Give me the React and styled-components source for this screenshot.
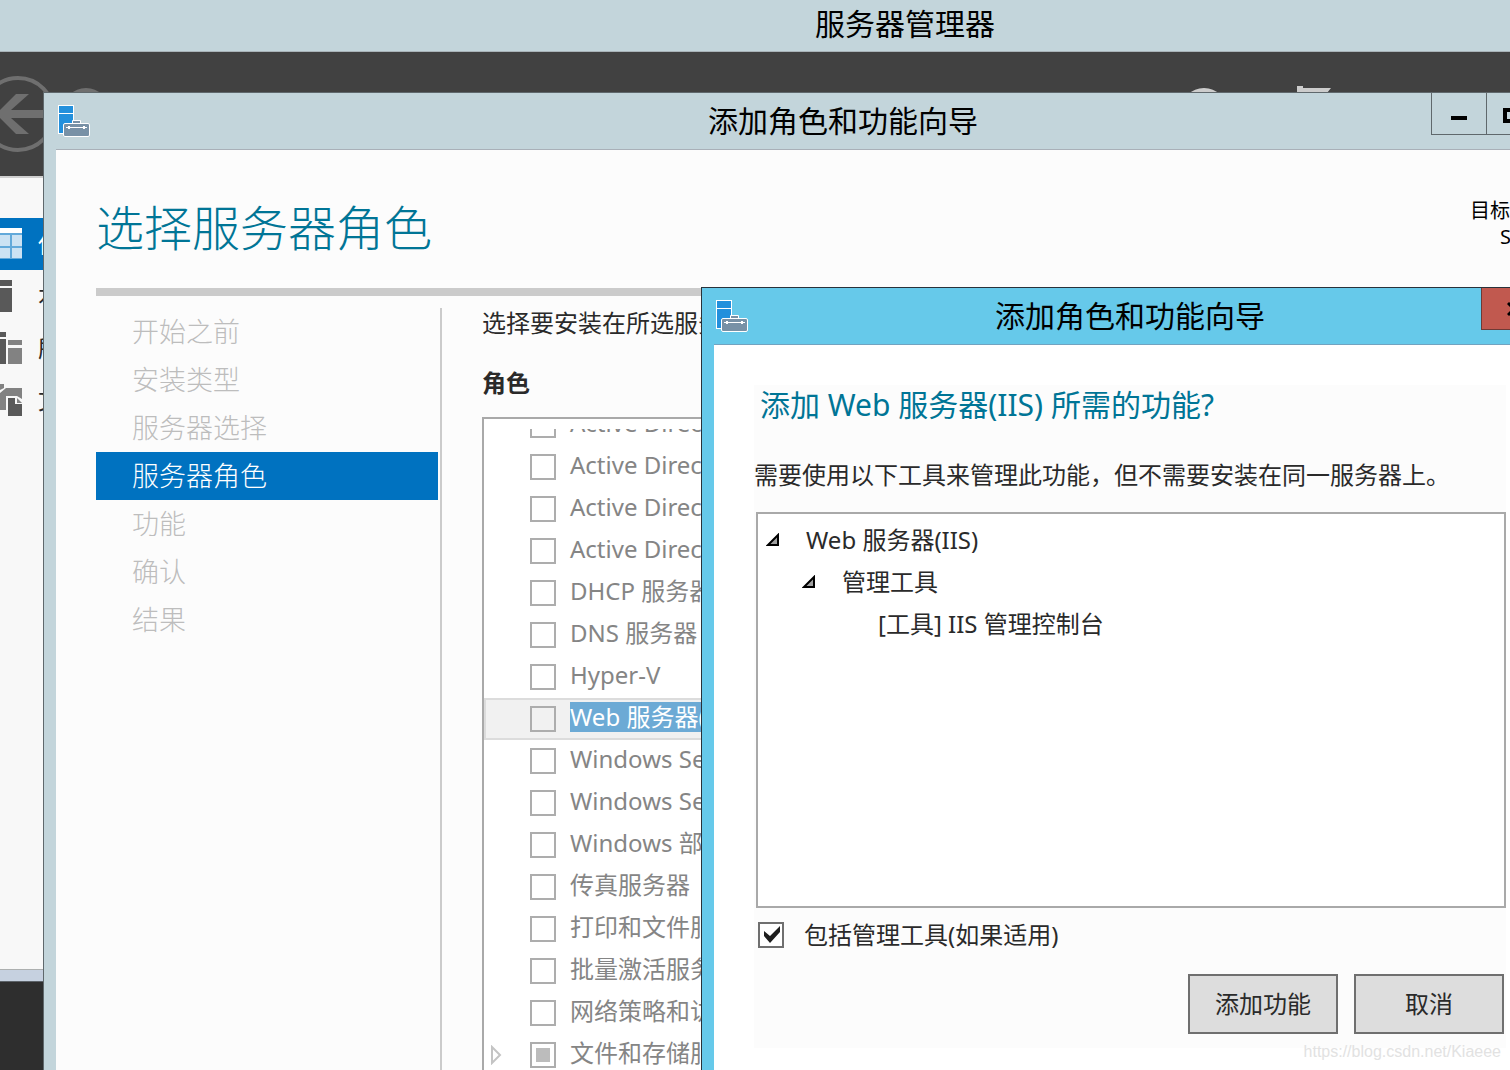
import styled, { createGlobalStyle } from "styled-components";
import { useEffect, useRef } from "react";

const GlobalStyle = createGlobalStyle`
  * {
    box-sizing: border-box;
  }

  body {
    margin: 0;
    font-family: "Noto Sans", "Noto Sans CJK SC", sans-serif;
    font-size: 24px;
    line-height: 30px;
    color: #2a2a2a;
  }

  h1,
  h2,
  h3,
  p,
  ul {
    margin: 0;
    padding: 0;
    font-weight: 400;
  }

  ul {
    list-style: none;
  }

  a {
    color: inherit;
    text-decoration: none;
  }
`;

const Desktop = styled.div`
  position: relative;
  height: 100vh;
  overflow: hidden;
  background-color: #2e2e2e;
`;

/* Server manager */

const ManagerWindow = styled.section`
  position: absolute;
  inset: 0 -300px 88px 0;
  display: flex;
  flex-direction: column;
  background-color: #c6d1e0;
  border-bottom: 1px solid #5c6268;
  padding-bottom: 11px;
`;

const ManagerTitle = styled.h1`
  height: 52px;
  padding-top: 2px;
  font-size: 30px;
  line-height: 44px;
  text-align: center;
  color: #000;
  background-color: #c3d5db;
  border-bottom: 1px solid #a9b3b8;
`;

const Toolbar = styled.div`
  display: flex;
  justify-content: space-between;
  height: 126px;
  padding-right: 460px;
  background-color: #414141;
  border-bottom: 2px solid #cfcfcf;
`;

const Sidebar = styled.nav`
  flex: 1;
  padding-top: 40px;
  background-color: #f8f8f8;
  border-bottom: 1px solid #adb0b0;
`;

const SidebarLink = styled.a`
  display: flex;
  align-items: center;
  gap: 16px;
  height: 52px;
  color: ${(props) => (props.$active ? "#fff" : "#2a2a2a")};
  background-color: ${(props) => (props.$active ? "#0072c0" : "transparent")};
`;

/* Shared window parts */

const AppWindow = styled.section`
  position: absolute;
  padding: 0 12px;
  border: 1px solid ${(props) => props.$edge};
  background-color: ${(props) => props.$frame};
`;

const WizardWindow = styled(AppWindow)`
  inset: 92px -133px -40px 43px;
  display: flex;
  flex-direction: column;
`;

const DialogWindow = styled(AppWindow)`
  top: 287px;
  left: 701px;
  right: -49px;
`;

const TitleBar = styled.header`
  display: grid;
  grid-template-columns: 1fr auto 1fr;
  height: 57px;
  border-bottom: 1px solid ${(props) => props.$line};
`;

const TitleIcon = styled.div`
  padding: 12px 2px;
  line-height: 0;
`;

const TitleText = styled.h2`
  font-size: 30px;
  line-height: 56px;
  color: #000;
`;

const TitleButtons = styled.div`
  display: flex;
  justify-content: flex-end;
`;

const CaptionButton = styled.button`
  display: flex;
  align-items: center;
  justify-content: center;
  width: ${(props) => (props.$wide ? 89 : 56)}px;
  height: 42px;
  margin: 0 0 0 -1px;
  padding: 8px 0 0;
  border: 1px solid #5f686c;
  border-top: 0;
  background: none;
`;

const DialogClose = styled(CaptionButton)`
  width: 65px;
  padding: 0;
  border-color: #6e3a36;
  background-color: #c1594f;
`;

/* Wizard */

const WizardBody = styled.div`
  flex: 1;
  display: flex;
  flex-direction: column;
  padding: 0 40px;
  background-color: #fcfcfc;
`;

const WizardHeader = styled.div`
  display: flex;
  justify-content: space-between;
  height: 146px;
  padding: 48px 20px 0 0;
  border-bottom: 8px solid #cbcbcb;
`;

const WizardHeading = styled.h1`
  font-size: 48px;
  font-weight: 300;
  line-height: 60px;
  color: #007596;
`;

const Target = styled.p`
  font-size: 20px;
  line-height: 26px;
  text-align: right;
  color: #000;
`;

const WizardColumns = styled.div`
  flex: 1;
  display: grid;
  grid-template-columns: 346px 1fr;
  gap: 40px;
  padding-top: 12px;
`;

const Steps = styled.nav`
  padding-right: 2px;
  border-right: 2px solid #cbcbcb;
`;

const Step = styled.a`
  display: block;
  padding-left: 36px;
  font-size: 27px;
  font-weight: 300;
  line-height: 48px;
  color: ${(props) => (props.$active ? "#fff" : "#bdbdbd")};
  background-color: ${(props) => (props.$active ? "#0072c0" : "transparent")};
`;

const RolesColumn = styled.div`
  display: flex;
  flex-direction: column;
`;

const RolesTitle = styled.h3`
  margin: 30px 0 19px;
  font-size: 24px;
  font-weight: 700;
`;

const RolesBox = styled.div`
  flex: 1;
  padding-top: 10px;
  border: 2px solid #a9a9a9;
  background-color: #fff;
`;

const RolesViewport = styled.div`
  overflow: hidden;
`;

const RolesList = styled.ul`
  margin-top: -25px;
`;

const RoleRow = styled.li`
  display: grid;
  grid-template-columns: 44px 1fr;
  align-items: center;
  height: 42px;
  border: 2px solid ${(props) => (props.$selected ? "#dcdcdc" : "transparent")};
  background-color: ${(props) => (props.$selected ? "#f1f1f1" : "transparent")};
`;

const Expander = styled.span`
  padding-left: 4px;
  line-height: 0;
`;

const RoleLabel = styled.label`
  display: flex;
  align-items: center;
  gap: 14px;
  color: #858585;
  white-space: nowrap;
`;

const RoleName = styled.span`
  margin-bottom: 4px;
  color: ${(props) => (props.$selected ? "#fff" : "inherit")};
  background-color: ${(props) => (props.$selected ? "#6caad5" : "transparent")};
`;

const Checkbox = styled.input`
  appearance: none;
  width: 26px;
  height: 26px;
  margin: 0;
  border: 2px solid #6f6f6f;
  background-color: #fff;

  &:disabled {
    border-color: #adadad;
    background-color: transparent;
  }

  &:checked::before {
    content: "";
    display: block;
    width: 22px;
    height: 22px;
    background-color: #1e1e1e;
    clip-path: polygon(4px 7px, 10px 12px, 20px 2px, 20px 8px, 10px 19px, 4px 12px);
  }

  &:indeterminate::before {
    content: "";
    display: block;
    width: 14px;
    height: 14px;
    margin: 4px;
    background-color: #bcbcbc;
  }
`;

/* Dialog */

const DialogBody = styled.div`
  padding: 40px;
  background-color: #fff;
`;

const DialogContent = styled.div`
  padding-bottom: 14px;
  background-color: #fcfcfc;
`;

const DialogHeading = styled.h1`
  padding-left: 6px;
  font-size: 30px;
  line-height: 40px;
  color: #007596;
`;

const DialogText = styled.p`
  margin: 35px 0 22px;
`;

const Tree = styled.ul`
  height: 396px;
  margin-left: 2px;
  padding: 5px 8px;
  border: 2px solid #a9a9a9;
  background-color: #fff;
`;

const TreeItem = styled.li`
  display: grid;
  grid-template-columns: 40px 1fr;
  align-items: center;
  height: 42px;
  padding-left: ${(props) => props.$level * 36}px;
`;

const TreeArrow = styled.span`
  line-height: 0;
`;

const ToolsLabel = styled.label`
  display: flex;
  align-items: center;
  gap: 20px;
  margin: 12px 0 24px;
  padding-left: 4px;
`;

const Actions = styled.div`
  display: flex;
  justify-content: flex-end;
  gap: 16px;
  padding-right: 2px;
`;

const ActionButton = styled.button`
  width: 150px;
  height: 60px;
  padding: 0;
  font: inherit;
  color: #2a2a2a;
  border: 2px solid #6f6f6f;
  background-color: #ddd;
`;

const Watermark = styled.p`
  position: absolute;
  right: 9px;
  bottom: 6px;
  font-family: "Liberation Sans", Arial, sans-serif;
  font-size: 16px;
  line-height: 24px;
  color: #e2e2e2;
`;

const steps = ["开始之前", "安装类型", "服务器选择", "服务器角色", "功能", "确认", "结果"];

const roles = [
  { name: "Active Directory 联合身份验证服务" },
  { name: "Active Directory 轻型目录服务" },
  { name: "Active Directory 域服务" },
  { name: "Active Directory 证书服务" },
  { name: "DHCP 服务器" },
  { name: "DNS 服务器" },
  { name: "Hyper-V" },
  { name: "Web 服务器(IIS)", selected: true },
  { name: "Windows Server Essentials 体验" },
  { name: "Windows Server 更新服务" },
  { name: "Windows 部署服务" },
  { name: "传真服务器" },
  { name: "打印和文件服务" },
  { name: "批量激活服务" },
  { name: "网络策略和访问服务" },
  { name: "文件和存储服务", partial: true },
];

const tree = ["Web 服务器(IIS)", "管理工具", "[工具] IIS 管理控制台"];

const ServerIcon = () => (
  <svg width="32" height="33" viewBox="0 0 32 33">
    <rect x="0.5" y="0.5" width="15" height="28" fill="#2390dc" stroke="#fff" />
    <path d="M1 8.5h14" stroke="#fff" />
    <path d="M14.5 19v-3.5h8V19" fill="#7891a6" stroke="#fff" />
    <rect x="5.5" y="18.5" width="26" height="13" rx="1.500" fill="#7891a6" stroke="#fff" />
    <path d="M8 22.5h21" stroke="#fff" />
    <path d="M10 22.5h2M25 22.5h2" stroke="#fff" strokeWidth="3" />
  </svg>
);

const NavButtonsIcon = () => (
  <svg width="120" height="124" viewBox="0 0 120 124" fill="none">
    <circle cx="18" cy="62" r="36" stroke="#6f6f6f" strokeWidth="4" />
    <path d="M-4 62 16 42h13L11 58h34v8H11l18 16H16z" fill="#6f6f6f" />
    <circle cx="86" cy="59" r="21" stroke="#6f6f6f" strokeWidth="4" />
  </svg>
);

const StatusIcon = () => (
  <svg width="170" height="124" viewBox="0 0 170 124" fill="none">
    <circle cx="24" cy="59" r="21" stroke="#ccc" strokeWidth="4" />
    <path d="M117 34h6v2h28l-8 10 8 10h-28v16h-6z" fill="#ccc" />
  </svg>
);

const DashboardIcon = () => (
  <svg width="22" height="32" viewBox="0 0 22 32" shapeRendering="crispEdges">
    <path d="M0 0h22v31H0z" fill="#62a9da" />
    <path d="M0 0h22v5H0z" fill="#fff" />
    <path d="M0 7h10v11H0zM12 7h10v11H12zM0 20h10v10H0zM12 20h10v10H12z" fill="#cbe2f3" />
  </svg>
);

const LocalServerIcon = () => (
  <svg width="22" height="32" viewBox="0 0 22 32">
    <path d="M0 0h12v6H0zM0 8h12v24H0z" fill="#595959" />
  </svg>
);

const AllServersIcon = () => (
  <svg width="22" height="32" viewBox="0 0 22 32">
    <path d="M0 0h6v5H0zM0 7h6v25H0z" fill="#595959" />
    <path d="M8 8h14v5H8zM8 16h14v16H8z" fill="#828282" />
  </svg>
);

const StorageIcon = () => (
  <svg width="22" height="32" viewBox="0 0 22 32">
    <path d="M0 0h4v4l-4 2zM0 9l6-5h16v11l-5-3H6v14H0z" fill="#828282" />
    <path d="M8 14h7v6h7v12H8z" fill="#595959" />
    <path d="M17 14l5 5h-5z" fill="#828282" />
  </svg>
);

const OpenArrow = () => (
  <svg width="14" height="14" viewBox="0 0 14 14">
    <path d="M2 12 12 2v10z" fill="#a0a0a0" stroke="#000" strokeWidth="2" />
  </svg>
);

const ClosedArrow = () => (
  <svg width="12" height="20" viewBox="0 0 12 20">
    <path d="M2 2l8 8-8 8z" fill="#fff" stroke="#c4c4c4" strokeWidth="2" />
  </svg>
);

const sidebarItems = [
  { name: "仪表板", Icon: DashboardIcon, active: true },
  { name: "本地服务器", Icon: LocalServerIcon },
  { name: "所有服务器", Icon: AllServersIcon },
  { name: "文件和存储服务", Icon: StorageIcon },
];

const Role = ({ name, selected = false, partial = false }) => {
  const box = useRef(null);

  useEffect(() => {
    box.current.indeterminate = partial;
  }, [partial]);

  return (
    <RoleRow $selected={selected}>
      <Expander>{partial && <ClosedArrow />}</Expander>
      <RoleLabel>
        <Checkbox type="checkbox" ref={box} disabled />
        <RoleName $selected={selected}>{name}</RoleName>
      </RoleLabel>
    </RoleRow>
  );
};

const Manager = () => (
  <ManagerWindow>
    <ManagerTitle>服务器管理器</ManagerTitle>
    <Toolbar>
      <NavButtonsIcon />
      <StatusIcon />
    </Toolbar>
    <Sidebar>
      {sidebarItems.map(({ name, Icon, active }) => (
        <SidebarLink key={name} href="#" $active={active}>
          <Icon />
          {name}
        </SidebarLink>
      ))}
    </Sidebar>
  </ManagerWindow>
);

const Wizard = () => (
  <WizardWindow $edge="#5f686c" $frame="#c3d5db">
    <TitleBar $line="#a9b0b8">
      <TitleIcon>
        <ServerIcon />
      </TitleIcon>
      <TitleText>添加角色和功能向导</TitleText>
      <TitleButtons>
        <CaptionButton aria-label="最小化">
          <svg width="16" height="4">
            <path d="M0 0h16v4H0z" />
          </svg>
        </CaptionButton>
        <CaptionButton aria-label="最大化">
          <svg width="22" height="22">
            <path d="M2 3h18v11H2z" fill="none" stroke="#000" strokeWidth="4" />
          </svg>
        </CaptionButton>
        <CaptionButton aria-label="关闭" $wide />
      </TitleButtons>
    </TitleBar>
    <WizardBody>
      <WizardHeader>
        <WizardHeading>选择服务器角色</WizardHeading>
        <Target>
          目标服务器
          <br />
          SERVER
        </Target>
      </WizardHeader>
      <WizardColumns>
        <Steps>
          {steps.map((step) => (
            <Step key={step} href="#" $active={step === "服务器角色"}>
              {step}
            </Step>
          ))}
        </Steps>
        <RolesColumn>
          <p>选择要安装在所选服务器上的一个或多个角色。</p>
          <RolesTitle>角色</RolesTitle>
          <RolesBox>
            <RolesViewport>
              <RolesList>
                {roles.map((role) => (
                  <Role key={role.name} {...role} />
                ))}
              </RolesList>
            </RolesViewport>
          </RolesBox>
        </RolesColumn>
      </WizardColumns>
    </WizardBody>
  </WizardWindow>
);

const FeatureDialog = () => (
  <DialogWindow $edge="#28323a" $frame="#66c9ea">
    <TitleBar $line="#72a3c0">
      <TitleIcon>
        <ServerIcon />
      </TitleIcon>
      <TitleText>添加角色和功能向导</TitleText>
      <TitleButtons>
        <DialogClose aria-label="关闭">
          <svg width="14" height="14">
            <path d="M1 1l12 12M13 1L1 13" stroke="#000" strokeWidth="3" />
          </svg>
        </DialogClose>
      </TitleButtons>
    </TitleBar>
    <DialogBody>
      <DialogContent>
        <DialogHeading>添加 Web 服务器(IIS) 所需的功能?</DialogHeading>
        <DialogText>需要使用以下工具来管理此功能，但不需要安装在同一服务器上。</DialogText>
        <Tree>
          {tree.map((item, level) => (
            <TreeItem key={item} $level={level}>
              <TreeArrow>{level < 2 && <OpenArrow />}</TreeArrow>
              {item}
            </TreeItem>
          ))}
        </Tree>
        <ToolsLabel>
          <Checkbox type="checkbox" defaultChecked />
          包括管理工具(如果适用)
        </ToolsLabel>
        <Actions>
          <ActionButton>添加功能</ActionButton>
          <ActionButton>取消</ActionButton>
        </Actions>
      </DialogContent>
    </DialogBody>
  </DialogWindow>
);

const App = () => (
  <Desktop>
    <GlobalStyle />
    <Manager />
    <Wizard />
    <FeatureDialog />
    <Watermark>https://blog.csdn.net/Kiaeee</Watermark>
  </Desktop>
);

export default App;
